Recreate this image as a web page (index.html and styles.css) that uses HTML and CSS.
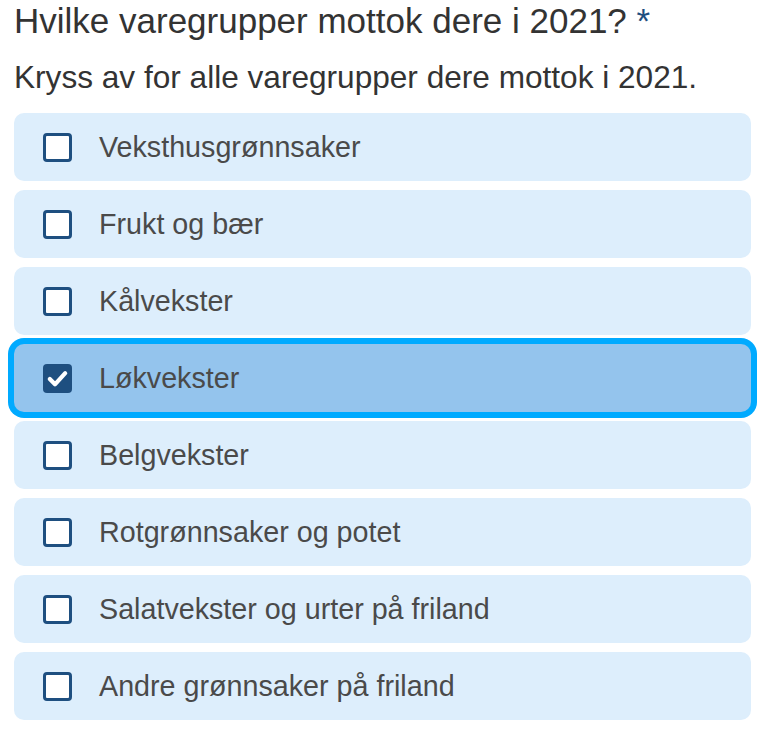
FILE: index.html
```html
<!DOCTYPE html>
<html lang="no">
<head>
<meta charset="utf-8">
<title>Varegrupper</title>
<link rel="stylesheet" href="styles.css">
</head>
<body>
<fieldset class="question">
  <legend class="title">Hvilke varegrupper mottok dere i 2021? <span class="req">*</span></legend>
  <p class="hint">Kryss av for alle varegrupper dere mottok i 2021.</p>
  <div class="options">
    <label class="option"><span class="box"></span><span class="label">Veksthusgrønnsaker</span></label>
    <label class="option"><span class="box"></span><span class="label">Frukt og bær</span></label>
    <label class="option"><span class="box"></span><span class="label">Kålvekster</span></label>
    <label class="option selected"><span class="box checked"><svg viewBox="0 0 29 29" width="29" height="29"><path d="M6.8 15 L12 20.3 L22.2 9.2" fill="none" stroke="#ffffff" stroke-width="4.2" stroke-linecap="round" stroke-linejoin="round"/></svg></span><span class="label">Løkvekster</span></label>
    <label class="option"><span class="box"></span><span class="label">Belgvekster</span></label>
    <label class="option"><span class="box"></span><span class="label">Rotgrønnsaker og potet</span></label>
    <label class="option"><span class="box"></span><span class="label">Salatvekster og urter på friland</span></label>
    <label class="option"><span class="box"></span><span class="label">Andre grønnsaker på friland</span></label>
  </div>
</fieldset>
</body>
</html>
```
FILE: styles.css
```css
html, body {
  margin: 0;
  padding: 0;
  background: #ffffff;
}
body {
  font-family: "Liberation Sans", Arial, sans-serif;
  color: #3a3a3a;
}
.question {
  border: 0;
  margin: 0;
  padding: 1px 17px 0 14px;
  min-width: 0;
}
.title {
  padding: 0;
  font-size: 35px;
  line-height: 40px;
  color: #333333;
  float: left;
  width: 100%;
}
.req {
  color: #1e4f80;
}
.hint {
  clear: both;
  margin: 0;
  padding-top: 16px;
  font-size: 31.6px;
  line-height: 40px;
  color: #333333;
}
.options {
  margin-top: 16px;
  display: flex;
  flex-direction: column;
  gap: 9px;
}
.option {
  display: flex;
  align-items: center;
  height: 68px;
  background: #ddeefc;
  border-radius: 10px;
  padding-left: 29px;
  box-sizing: border-box;
}
.option.selected {
  background: #94c4ed;
  box-shadow: 0 0 0 6px #00aaff;
  border-radius: 10px;
}
.box {
  flex: none;
  width: 29px;
  height: 29px;
  box-sizing: border-box;
  border: 3px solid #1e4f80;
  border-radius: 4px;
  background: #ffffff;
  margin-right: 27px;
  display: flex;
  align-items: center;
  justify-content: center;
}
.box.checked {
  background: #1e4f80;
  border: 0;
}
.box svg {
  display: block;
}
.label {
  font-size: 28.7px;
  line-height: 34px;
  color: #4a4a4a;
}
```
